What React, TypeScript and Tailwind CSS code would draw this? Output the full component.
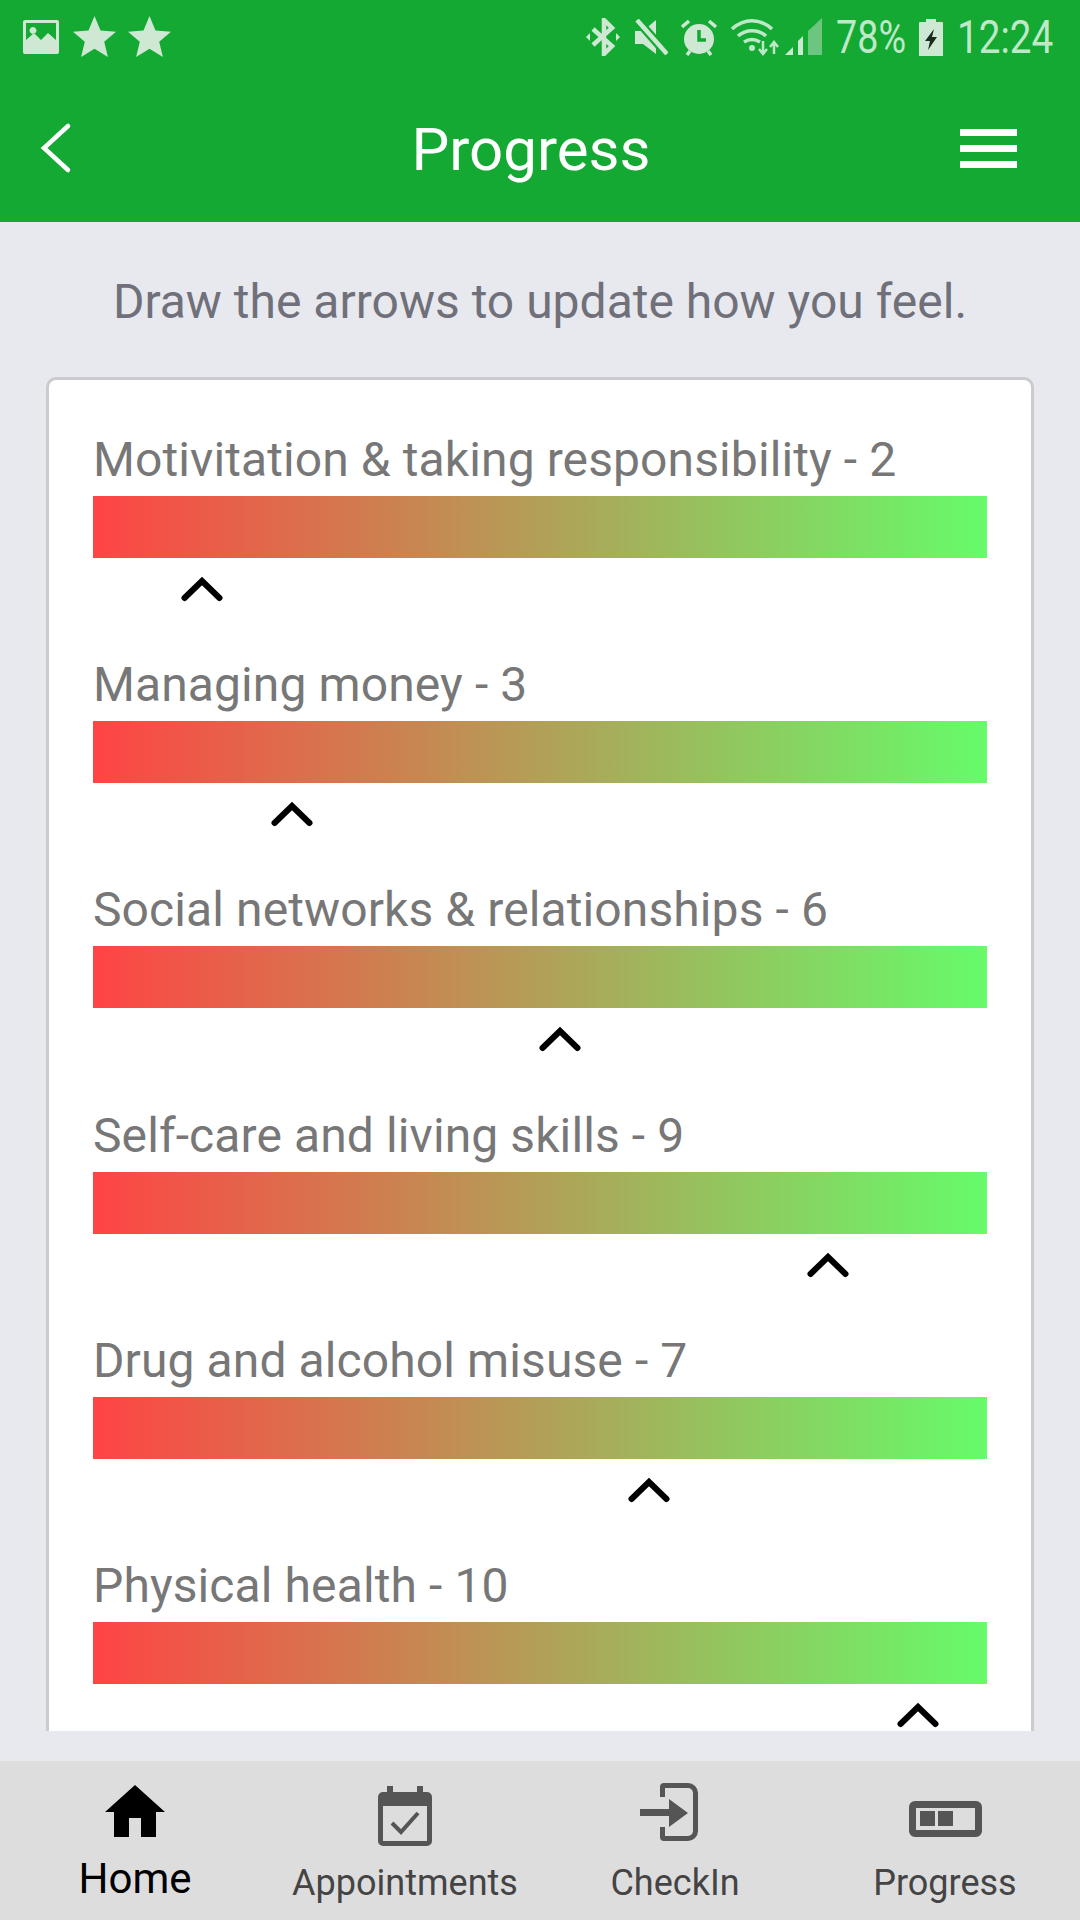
const skills = [
  { label: "Motivitation & taking responsibility", value: 2 },
  { label: "Managing money", value: 3 },
  { label: "Social networks & relationships", value: 6 },
  { label: "Self-care and living skills", value: 9 },
  { label: "Drug and alcohol misuse", value: 7 },
  { label: "Physical health", value: 10 },
];

const star = "M21.500 0l6 14.500 15.500 1.200-11.800 10.100 3.700 15.200-13.400-8.200-13.400 8.200 3.700-15.200L0 15.700l15.500-1.200z";

function StatusBar() {
  return (
    <div className="h-[74px] flex items-center justify-between pl-[23px] pr-[27px] text-[#bfe8c8]">
      <div className="flex items-center">
        <svg width="36" height="34" viewBox="0 0 36 34" fill="#cfe8d3" className="mr-[14px]">
          <path fillRule="evenodd" d="M2 0h32a2 2 0 0 1 2 2v30a2 2 0 0 1-2 2H2a2 2 0 0 1-2-2V2a2 2 0 0 1 2-2zM3 3v17l8-7 7 7 7-7 8 7V3zM10 7a3.500 3.500 0 1 1-.01 0z" />
        </svg>
        <svg width="43" height="42" viewBox="0 0 43 42" fill="#cfe8d3" className="mr-[12px]"><path d={star} /></svg>
        <svg width="43" height="42" viewBox="0 0 43 42" fill="#cfe8d3"><path d={star} /></svg>
      </div>
      <div className="flex items-center">
        <svg width="34" height="38" viewBox="0 0 34 38" fill="none" stroke="#cfe8d3" className="mr-[15px]">
          <path d="M7 11l19 17-8 8V2l8 8L7 27" strokeWidth="4.500" />
          <path d="M0 19l4-4v8zM34 19l-4-4v8z" fill="#cfe8d3" stroke="none" />
        </svg>
        <svg width="33" height="36" viewBox="0 0 33 36" className="mr-[13px]">
          <path d="M0 12h8L21 1v34L8 25H0z" fill="#cfe8d3" />
          <path d="M2 1l30 34" stroke="#13a932" strokeWidth="9" />
          <path d="M2 1l30 34" stroke="#cfe8d3" strokeWidth="4.500" />
        </svg>
        <svg width="36" height="38" viewBox="0 0 36 38" className="mr-[14px]">
          <circle cx="18" cy="21" r="15" fill="#cfe8d3" />
          <path d="M18 12v10h7" fill="none" stroke="#13a932" strokeWidth="3.500" />
          <path d="M1 9l7-6M35 9l-7-6M6 37l3-4M30 37l-3-4" stroke="#cfe8d3" strokeWidth="3.500" />
        </svg>
        <svg width="48" height="38" viewBox="0 0 48 38" fill="none" stroke="#bfe8c8" strokeWidth="3.500" className="mr-[6px]">
          <path d="M1 11c12-11 28-11 40 0M7 18c8-7 20-7 28 0M13 24c5-3 11-3 16 0" />
          <circle cx="21" cy="30" r="3" fill="#bfe8c8" stroke="none" />
          <path d="M32 23v13M28 31l4 5 4-5" strokeWidth="2.500" />
          <path d="M43 36V25M39 29l4-5 4 5" strokeWidth="2.500" />
        </svg>
        <svg width="37" height="38" viewBox="0 0 37 38" className="mr-[14px]">
          <path d="M0 37l8-8v8z" fill="#c9ead0" />
          <path d="M13 37V23l5-5v19z" fill="#c9ead0" />
          <path d="M23 37V13L37 0v37z" fill="#6cc67f" />
        </svg>
        <div className="w-[70px] mr-[13px]">
          <span className="font-['Roboto',sans-serif] text-[46px] leading-none inline-block scale-x-[0.82] origin-left whitespace-nowrap">78%</span>
        </div>
        <svg width="24" height="37" viewBox="0 0 24 37" className="mr-[14px]">
          <path d="M7 0h10v3h6a1 1 0 0 1 1 1v33H0V4a1 1 0 0 1 1-1h6z" fill="#cfe8d3" />
          <path d="M15 10l-9 12h5l-2 9 9-13h-5z" fill="#1c2a1e" />
        </svg>
        <div className="w-[96px]">
          <span className="font-['Roboto',sans-serif] text-[46px] leading-none inline-block scale-x-[0.84] origin-left whitespace-nowrap">12:24</span>
        </div>
      </div>
    </div>
  );
}

function Header() {
  return (
    <header className="bg-[#13a932] h-[222px] shrink-0 flex flex-col">
      <StatusBar />
      <div className="flex-1 flex items-center justify-between pl-[28px] pr-[63px] text-white">
        <svg width="56" height="56" viewBox="0 0 56 56" fill="none" stroke="#ffffff" strokeWidth="4.500" strokeLinecap="round">
          <path d="M40 6L16 28l24 22" />
        </svg>
        <h1 className="font-['Roboto',sans-serif] text-[60px] leading-none ml-[18px] pt-[4px]">Progress</h1>
        <div className="flex flex-col gap-[9px] w-[57px]">
          <div className="h-[7px] bg-white" />
          <div className="h-[7px] bg-white" />
          <div className="h-[7px] bg-white" />
        </div>
      </div>
    </header>
  );
}

function SkillRow({ label, value }: { label: string; value: number }) {
  return (
    <div className="h-[225.200px] shrink-0">
      <p className="font-['Roboto',sans-serif] text-[48px] leading-[54px] tracking-[0.1px] text-[#777777] whitespace-nowrap">
        {label} - {value}
      </p>
      <div className="h-[62px] mt-[9px] bg-linear-to-r/srgb from-[#ff4444] to-[#66fb6a]" />
      <svg
        width="42"
        height="26"
        viewBox="0 0 42 26"
        fill="none"
        stroke="#000000"
        strokeWidth="6"
        strokeLinecap="round"
        className="mt-[18px]"
        style={{ marginLeft: (value - 1) * 89.4 - 1 }}
      >
        <path d="M3.500 22L21 5l17.500 17" />
      </svg>
    </div>
  );
}

function TabIcon({ name }: { name: string }) {
  if (name === "Home") {
    return (
      <svg width="60" height="52" viewBox="0 0 60 52" fill="#000000">
        <path d="M30 0l30 27h-9v25H36V33H24v19H9V27H0z" />
      </svg>
    );
  }
  if (name === "Appointments") {
    return (
      <svg width="54" height="60" viewBox="0 0 54 60" fill="#555555">
        <path fillRule="evenodd" d="M9 0h6v6h24V0h6v6h4a5 5 0 0 1 5 5v44a5 5 0 0 1-5 5H5a5 5 0 0 1-5-5V11a5 5 0 0 1 5-5h4zM5 20v35h44V20z" />
        <path d="M14 37l9 9 17-19" fill="none" stroke="#555555" strokeWidth="4" />
      </svg>
    );
  }
  if (name === "CheckIn") {
    return (
      <svg width="58" height="58" viewBox="0 0 58 58" fill="#555555">
        <path d="M20 14V4a4 4 0 0 1 4-4h24a10 10 0 0 1 10 10v38a10 10 0 0 1-10 10H24a4 4 0 0 1-4-4V44h5v9h23a5 5 0 0 0 5-5V10a5 5 0 0 0-5-5H25v9z" />
        <path d="M0 26h29V16l19 14-19 14V33H0z" />
      </svg>
    );
  }
  return (
    <svg width="73" height="36" viewBox="0 0 73 36" fill="#555555">
      <path fillRule="evenodd" d="M6 0h61a6 6 0 0 1 6 6v24a6 6 0 0 1-6 6H6a6 6 0 0 1-6-6V6a6 6 0 0 1 6-6zM7 7v22h59V7z" />
      <path d="M11 10h15v15H11zM29 10h15v15H29z" />
    </svg>
  );
}

function BottomNav() {
  const tabs = [
    { name: "Home", icon: "pb-[8px]", text: "text-[42px] text-black mt-[9px]" },
    { name: "Appointments", icon: "pt-[2px]", text: "text-[36px] text-[#444444] mt-[13px]" },
    { name: "CheckIn", icon: "pb-[6px] pr-[12px]", text: "text-[36px] text-[#444444] mt-[13px]" },
    { name: "Progress", icon: "pt-[8px]", text: "text-[36px] text-[#444444] mt-[13px]" },
  ];
  return (
    <nav className="h-[159px] shrink-0 bg-[#dddddd] grid grid-cols-4">
      {tabs.map((tab) => (
        <div key={tab.name} className="flex flex-col items-center pt-[21px]">
          <div className={`h-[66px] flex items-center justify-center ${tab.icon}`}>
            <TabIcon name={tab.name} />
          </div>
          <span className={`font-['Roboto',sans-serif] leading-[44px] ${tab.text}`}>{tab.name}</span>
        </div>
      ))}
    </nav>
  );
}

export default function App() {
  return (
    <div className="w-[1080px] h-[1920px] bg-[#e8e9ee] flex flex-col overflow-hidden">
      <Header />
      <main className="flex-1 flex flex-col min-h-0">
        <p className="font-['Roboto',sans-serif] text-[48px] leading-[54px] text-[#70707a] text-center pt-[53px] shrink-0">
          Draw the arrows to update how you feel.
        </p>
        <div className="h-[1354px] mt-[48px] mx-[46px] bg-white border-[3px] border-b-0 border-[#cbcbce] rounded-t-[10px] pl-[44px] pr-[44px] pt-[53px] overflow-hidden shrink-0">
          {skills.map((skill) => (
            <SkillRow key={skill.label} label={skill.label} value={skill.value} />
          ))}
        </div>
      </main>
      <BottomNav />
    </div>
  );
}
